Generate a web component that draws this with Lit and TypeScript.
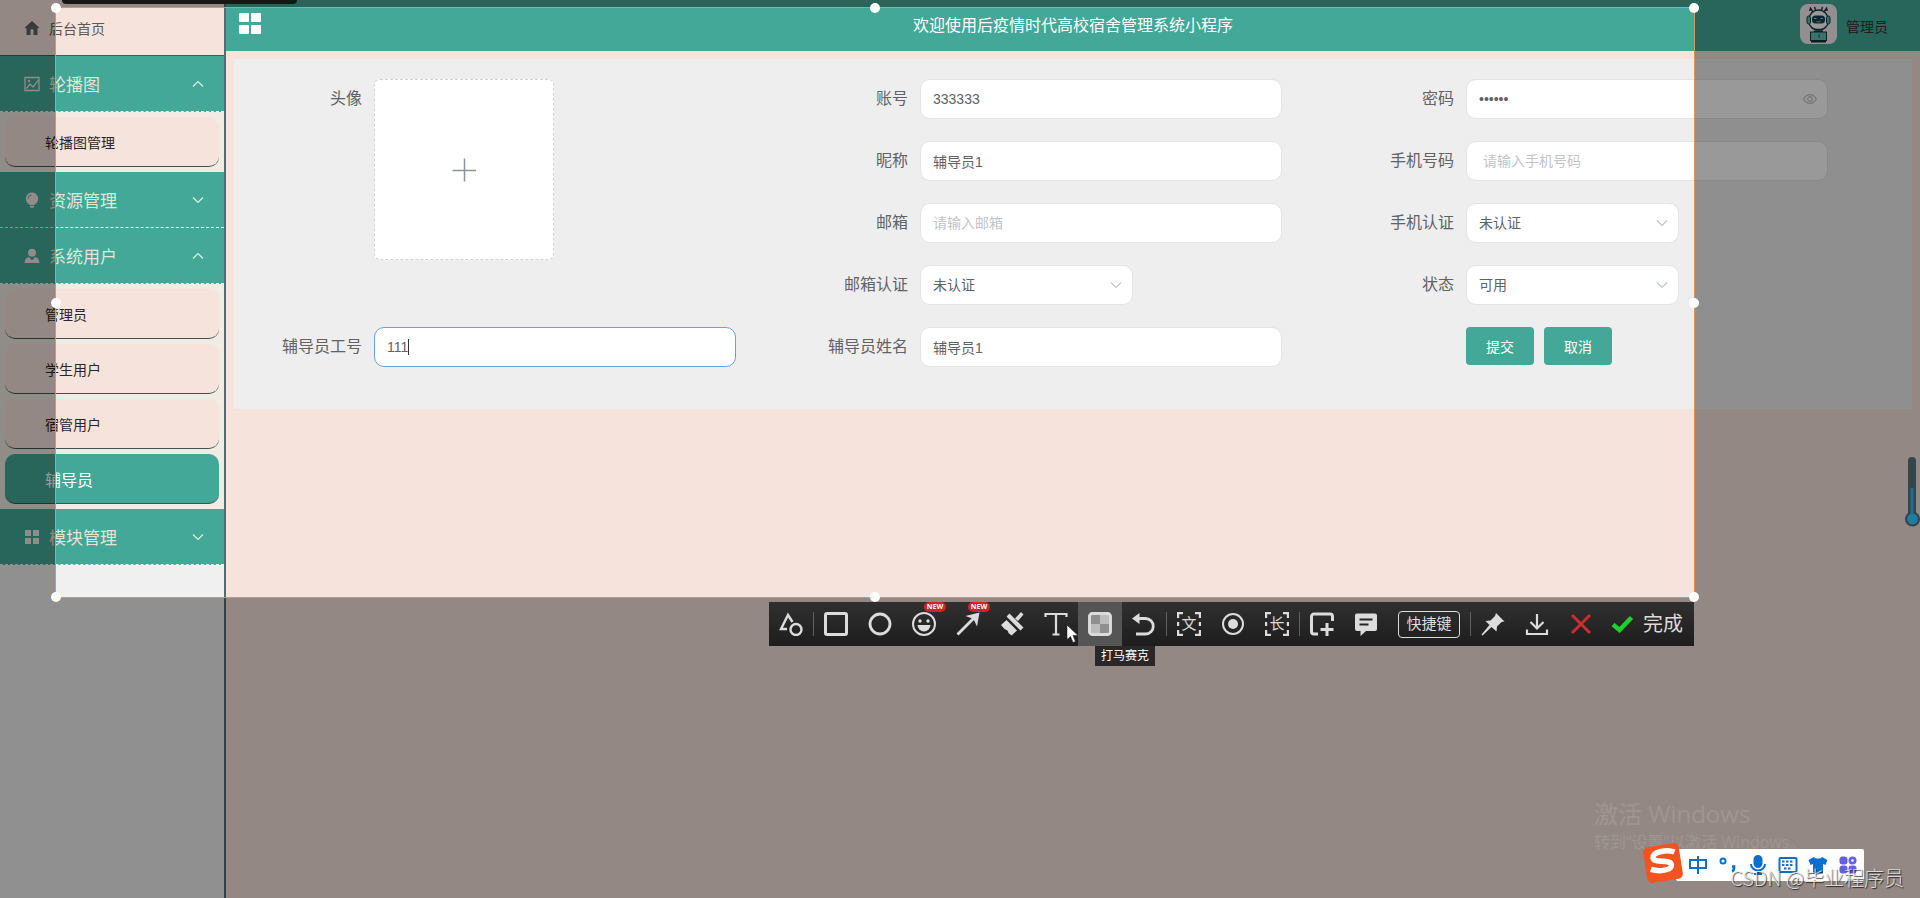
import { LitElement, html, css, svg, nothing } from "lit";
import { customElement, property } from "lit/decorators.js";
import { classMap } from "lit/directives/class-map.js";

const chevronDown = html`<svg class="chevron" width="12" height="8" viewBox="0 0 12 8" fill="none" stroke="currentColor" stroke-width="1.2"><path d="M1 1.5 6 6.5 11 1.5" /></svg>`;
const chevronUp = html`<svg class="chevron" width="12" height="8" viewBox="0 0 12 8" fill="none" stroke="currentColor" stroke-width="1.2"><path d="M1 6.5 6 1.5 11 6.5" /></svg>`;

const menuIcons: Record<string, unknown> = {
  home: svg`<path fill="currentColor" d="M8 1 .8 7.4l.9.9.8-.6V15h4v-4.500a1.500 1.500 0 0 1 3 0V15h4V7.700l.8.6.9-.9z"/>`,
  picture: svg`<path fill="none" stroke="currentColor" stroke-width="1.300" d="M1 1.500h14v13H1zM2.500 12.500 6 8l3 3 5.500-7"/><circle cx="5" cy="5" r="1.200" fill="currentColor"/>`,
  bulb: svg`<path fill="currentColor" d="M8 .5a6.300 6.300 0 0 0-3.800 11.200L5.500 13h5l1.300-1.300A6.300 6.300 0 0 0 8 .5zM6 13.800h4v1.500l-2 .7-2-.7z"/><path d="M4 6.500A4 4 0 0 1 7.500 3" stroke="#7d9c95" fill="none"/>`,
  user: svg`<circle cx="8" cy="4.700" r="4" fill="currentColor"/><path fill="currentColor" d="M5 9l3 3.500L11 9c2.700.8 4.500 2.800 4.500 6H.5C.5 11.800 2.300 9.800 5 9z"/>`,
  grid: svg`<path fill="currentColor" d="M1 1h6v6H1zM9 1h6v6H9zM1 9h6v6H1zM9 9h6v6H9z"/>`,
};

interface MenuGroup {
  title: string;
  icon: string;
  open: boolean;
  items: string[];
}

const groups: MenuGroup[] = [
  { title: "轮播图", icon: "picture", open: true, items: ["轮播图管理"] },
  { title: "资源管理", icon: "bulb", open: false, items: [] },
  { title: "系统用户", icon: "user", open: true, items: ["管理员", "学生用户", "宿管用户", "辅导员"] },
  { title: "模块管理", icon: "grid", open: false, items: [] },
];

@customElement("side-menu")
export class SideMenu extends LitElement {
  @property() active = "辅导员";

  static styles = css`
    :host { display: block; background: #f0f0f0; border-right: 2px solid #586b73; }
    * { box-sizing: border-box; }
    a { text-decoration: none; }
    .home, .group { display: flex; align-items: center; height: 56px; width: 100%; padding: 0 20px 0 24px; gap: 9px; }
    .home { background: #f5e3dc; border-bottom: 1px solid #3d5f5f; font-size: 14px; color: #5a5a5a; }
    .home .icon { color: #5f6264; }
    .group { background: #43a897; border: 0; border-bottom: 1px dashed #eef3e8; font: inherit; font-size: 17px; color: #e2e6d6; text-align: left; }
    .group .title { flex: 1; }
    .group .chevron { color: #d9f2e6; }
    .icon { width: 16px; height: 16px; color: #eeeae6; }
    .list { background: #f0ece3; padding: 5px; display: grid; gap: 5px; }
    .item { display: flex; align-items: center; height: 50px; padding: 0 40px; border-radius: 10px; border-bottom: 1px solid #3e5256; background: #f5e3dc; color: #2c2626; font-size: 14px; }
    .item.active { background: #43a897; color: #fff; font-size: 16px; }
  `;

  render() {
    return html`
      <nav>
        <a class="home" href="#home"><svg class="icon" viewBox="0 0 16 16">${menuIcons.home}</svg><span>后台首页</span></a>
        ${groups.map((g) => html`
          <button class="group" aria-expanded=${g.open}>
            <svg class="icon" viewBox="0 0 16 16">${menuIcons[g.icon]}</svg>
            <span class="title">${g.title}</span>
            ${g.open ? chevronUp : chevronDown}
          </button>
          ${g.open ? html`<div class="list">${g.items.map((t) => html`
            <a href="#" class=${classMap({ item: true, active: t === this.active })}>${t}</a>`)}</div>` : nothing}
        `)}
      </nav>`;
  }
}

@customElement("top-bar")
export class TopBar extends LitElement {
  static styles = css`
    :host { display: grid; grid-template-columns: 1fr auto 1fr; height: 51px; background: #43a897; padding: 0 32px 0 13px; }
    .toggle { justify-self: start; align-self: start; margin-top: 13px; padding: 0; border: 0; background: none; width: 22px; height: 22px; }
    .toggle svg { display: block; }
    h1 { margin: 0; padding: 14px 0 0 19px; font-size: 16px; line-height: 24px; font-weight: 400; color: #fff; }
    .user { justify-self: end; display: flex; gap: 9px; padding-top: 4px; height: 40px; font-size: 14px; line-height: 46px; color: #333; }
  `;
  render() {
    return html`
      <button class="toggle" aria-label="菜单"><svg width="22" height="22" viewBox="0 0 22 22" fill="#fff"><rect width="10" height="9" rx="1" /><rect x="12" width="10" height="9" rx="1" /><rect y="12" width="10" height="9" rx="1" /><rect x="12" y="12" width="10" height="9" rx="1" /></svg></button>
      <h1>欢迎使用后疫情时代高校宿舍管理系统小程序</h1>
      <div class="user">
        <svg width="37" height="40" viewBox="0 0 37 40">
          <rect width="37" height="40" rx="8" fill="#f4eef2" />
          <g fill="none" stroke="#1c3440" stroke-width="1.400">
            <path d="M13 8 10 3.500M15.500 6 14.500 3M24 8l3-4.500M21.500 6l1-3M11 6H9M26 6h2" />
            <path d="M9 15a9.500 9 0 0 1 19 0v3a9.500 8 0 0 1-19 0z" fill="#fff" />
            <path d="M14 25.500h9M14 27.500h9" />
          </g>
          <rect x="7" y="12" width="3.500" height="8" rx="1.700" fill="#56bdb0" stroke="#1c3440" />
          <rect x="26.500" y="12" width="3.500" height="8" rx="1.700" fill="#56bdb0" stroke="#1c3440" />
          <rect x="12" y="11.500" width="13" height="8" rx="3.500" fill="#16404f" />
          <path d="M14 14.500h2.500M20.500 14.500H23M16.500 17.200c1.500 1 2.500 1 4 0" stroke="#8fdcd8" fill="none" />
          <rect x="10.500" y="28" width="16" height="8.500" fill="#62c0b4" stroke="#1c3440" />
          <path d="M19.500 30.500a2 2 0 0 0 0 3" stroke="#16404f" fill="none" />
          <path d="M11 37.500h15" stroke="#10303a" stroke-width="2" />
        </svg>
        <span>管理员</span>
      </div>`;
  }
}

@customElement("counselor-form")
export class CounselorForm extends LitElement {
  static styles = css`
    :host { display: block; background: #eee; padding: 20px; }
    * { box-sizing: border-box; }
    form { display: grid; grid-template-columns: repeat(3, 1fr); row-gap: 22px; padding-bottom: 22px; }
    .row { display: grid; grid-template-columns: 120px 1fr; align-items: start; min-height: 40px; }
    .tall { grid-row: span 4; height: 226px; }
    label { padding-right: 12px; text-align: right; font-size: 16px; line-height: 40px; color: #606266; white-space: nowrap; }
    .field { position: relative; display: grid; width: 85%; align-items: center; }
    .field.half { width: 50%; }
    .field > * { grid-area: 1 / 1; }
    .box { appearance: none; width: 100%; height: 40px; padding: 0 12px; border: 1px solid #e4e4e4; border-radius: 10px; background: #fff; font: inherit; font-size: 14px; color: #606266; outline: 0; }
    .box::placeholder { color: #c0c4cc; }
    .box.focused { border-color: #6a9fd8; }
    .mark { justify-self: end; margin-right: 11px; color: #c0c4cc; pointer-events: none; }
    .caret { position: absolute; left: 34px; top: 12px; width: 1px; height: 16px; background: #333; }
    .upload { width: 180px; height: 181px; display: grid; place-items: center; border: 1px dashed #d4d4d4; border-radius: 6px; background: #fff; padding: 0; }
    .actions { grid-column: 2; display: flex; gap: 10px; }
    .btn { width: 68px; height: 38px; padding: 0; border: 0; border-radius: 4px; background: #43a897; color: #fff; font: inherit; font-size: 14px; }
  `;

  private text(id: string, label: string, value: string, placeholder = "", focused = false) {
    return html`<div class="row"><label for=${id}>${label}</label>
      <div class="field"><input id=${id} class=${classMap({ box: true, focused })} type="text" .value=${value} placeholder=${placeholder} />${focused ? html`<i class="caret"></i>` : nothing}</div></div>`;
  }

  private pick(id: string, label: string, options: string[]) {
    return html`<div class="row"><label for=${id}>${label}</label>
      <div class="field half"><select id=${id} class="box">${options.map((o) => html`<option>${o}</option>`)}</select>
      <svg class="mark" width="12" height="8" viewBox="0 0 12 8" fill="none" stroke="currentColor" stroke-width="1.200"><path d="M1 1.500 6 6.500 11 1.500" /></svg></div></div>`;
  }

  render() {
    return html`<form>
      <div class="row tall"><label for="photo">头像</label>
        <button id="photo" type="button" class="upload" aria-label="头像"><svg width="24" height="24" viewBox="0 0 24 24" stroke="#8c939d" stroke-width="1.500"><path d="M12.500 .5v23M.5 12.500h24" /></svg></button></div>
      ${this.text("account", "账号", "333333")}
      <div class="row"><label for="pwd">密码</label>
        <div class="field"><input id="pwd" class="box" type="password" value="333333" autocomplete="off" />
        <svg class="mark" width="14" height="12" viewBox="0 0 14 12" fill="none" stroke="currentColor" stroke-width="1.200"><path d="M.7 6C3.500.2 10.500.2 13.300 6 10.500 11.800 3.500 11.800.7 6z" /><circle cx="7" cy="6" r="2.300" /></svg></div></div>
      ${this.text("nick", "昵称", "辅导员1")}
      ${this.text("phone", "手机号码", "", " 请输入手机号码")}
      ${this.text("mail", "邮箱", "", "请输入邮箱")}
      ${this.pick("phone-ok", "手机认证", ["未认证", "已认证"])}
      ${this.pick("mail-ok", "邮箱认证", ["未认证", "已认证"])}
      ${this.pick("state", "状态", ["可用", "禁用"])}
      ${this.text("number", "辅导员工号", "111", "", true)}
      ${this.text("name", "辅导员姓名", "辅导员1")}
      <div class="row"><div class="actions"><button type="button" class="btn">提交</button><button type="button" class="btn">取消</button></div></div>
    </form>`;
  }
}

const bracket = svg`<path d="M1 6V1h5M18 1h5v5M23 18v5h-5M6 23H1v-5M1 10v4M23 10v4" />`;

interface Tool {
  name: string;
  art?: unknown;
  glyph?: string;
  badge?: boolean;
  on?: boolean;
}

const tools: (Tool | null)[] = [
  { name: "图形", art: svg`<path d="M8 17H2L9 3l4.500 7" /><circle cx="17" cy="17.500" r="5.500" />` },
  null,
  { name: "矩形", art: svg`<rect x="1.500" y="1.500" width="21" height="21" rx="1.500" stroke-width="3" />` },
  { name: "圆形", art: svg`<circle cx="12" cy="12" r="10" stroke-width="2.800" />` },
  { name: "表情", badge: true, art: svg`<circle cx="12" cy="12" r="11" stroke-width="2" /><g fill="currentColor" stroke="none"><circle cx="8" cy="9" r="1.700" /><circle cx="16" cy="9" r="1.700" /><path d="M5.500 13h13a6.500 6.500 0 0 1-13 0z" /></g>` },
  { name: "箭头", badge: true, art: svg`<path d="M1.500 22.500 18 6" stroke-width="2.800" /><path d="M9.500 4 23.500 0.500 21 14.500 17.500 7z" fill="currentColor" stroke="none" />` },
  { name: "画笔", art: svg`<g fill="currentColor" stroke="none"><path d="M1 13 6.500 8 17 18.500 11.500 23.500 8.500 21 7.500 18.500 4.500 17z M6.500 4.500 9.500 1.500 23.500 15.500 20.500 18.500z M15 6.500 21 0l2.500 2.500L18 9z" /></g>` },
  { name: "文字", art: svg`<path d="M1.500 5V2h21v3M12 2v20M8.500 22.500h7" stroke-width="2.200" />` },
  { name: "打马赛克", on: true, art: svg`<rect x="1.500" y="1.500" width="21" height="21" rx="3" fill="#bdbdbd" /><path d="M3 3h9v9H3zM12 12h9v9h-9z" fill="#8f8f8f" stroke="none" /><rect x="1.500" y="1.500" width="21" height="21" rx="3" stroke-width="2.800" />` },
  { name: "撤销", art: svg`<path d="M4 22h9.500a7.500 7.500 0 0 0 0-15.500H4" stroke-width="2.800" /><path d="M0 6.500 7.500 1v11z" fill="currentColor" stroke="none" />` },
  null,
  { name: "翻译", glyph: "文", art: bracket },
  { name: "录屏", art: svg`<circle cx="12" cy="12" r="10" stroke-width="2" /><circle cx="12" cy="12" r="5" fill="currentColor" stroke="none" />` },
  { name: "长截图", glyph: "长", art: bracket },
  null,
  { name: "添加", art: svg`<path d="M8 22H4a2.500 2.500 0 0 1-2.500-2.500v-15A2.500 2.500 0 0 1 4 2h16a2.500 2.500 0 0 1 2.500 2.500V9M17 11v13M10.500 17.500h13" stroke-width="3" />` },
  { name: "备注", art: svg`<path d="M3 1.500h18a2 2 0 0 1 2 2V17a2 2 0 0 1-2 2h-9l-5.500 5V19H3a2 2 0 0 1-2-2V3.500a2 2 0 0 1 2-2z" fill="currentColor" stroke="none" /><path d="M5.500 7.500h13M5.500 12.500h9" stroke="#262525" stroke-width="2" />` },
];

const tail: Tool[] = [
  { name: "钉在桌面", art: svg`<path d="M15 1l8.500 8.500-3 .5-4.500 4.500-.5 5L10.500 15 1.500 23.500.5 22.500 8.500 13 4.500 9l5-.5L14 4z" fill="currentColor" stroke="none" />` },
  { name: "保存", art: svg`<path d="M12 2v14M5.500 10 12 16.500 18.500 10M2 17.500V22h20v-4.500" stroke-width="2.200" />` },
  { name: "关闭", art: svg`<path d="M3 3l18 18M21 3 3 21" stroke="#cf2b33" stroke-width="3" />` },
];

@customElement("snip-toolbar")
export class SnipToolbar extends LitElement {
  static styles = css`
    :host { display: flex; align-items: stretch; height: 44px; background: linear-gradient(#303030, #1e1d1d); color: #dcdcdc; }
    * { box-sizing: border-box; }
    button { border: 0; padding: 0; background: none; color: inherit; font: inherit; white-space: nowrap; }
    .tool { position: relative; width: 44px; display: grid; place-items: center; }
    .tool > svg, .tool > .glyph { grid-area: 1 / 1; }
    .tool.on { background: #555; }
    .glyph { font-size: 15px; line-height: 20px; }
    .sep { width: 1px; margin: 10px 0; background: #606060; }
    .badge { position: absolute; right: 0; top: 0; width: 22px; height: 10px; border-radius: 5px; background: #e01c22; color: #fff; font: 700 7px/10px "Open Sans", sans-serif; text-align: center; }
    .tip { position: absolute; left: 17px; top: 44px; padding: 0 6px; background: #2b2727; color: #fff; font-size: 12px; line-height: 20px; white-space: nowrap; }
    .keys { align-self: center; width: 62px; height: 27px; margin: 0 10px; border: 1px solid #dcdcdc; border-radius: 4px; font-size: 15px; line-height: 20px; }
    .done { display: flex; align-items: center; gap: 9px; padding: 0 11px 0 8px; font-size: 20px; line-height: 24px; }
  `;

  private tool(t: Tool) {
    return html`<button class=${classMap({ tool: true, on: !!t.on })} aria-label=${t.name}>
      <svg width="24" height="24" viewBox="0 0 24 24" fill="none" stroke="currentColor" stroke-width="2.400">${t.art}</svg>
      ${t.glyph ? html`<span class="glyph">${t.glyph}</span>` : nothing}
      ${t.badge ? html`<span class="badge">NEW</span>` : nothing}
      ${t.on ? html`<span class="tip">${t.name}</span>` : nothing}
    </button>`;
  }

  render() {
    return html`
      ${tools.map((t) => (t ? this.tool(t) : html`<i class="sep"></i>`))}
      <button class="keys">快捷键</button><i class="sep"></i>
      ${tail.map((t) => this.tool(t))}
      <button class="done"><svg width="23" height="18" viewBox="0 0 23 18"><path d="M2 9.500 8.500 15 20.500 2.500" fill="none" stroke="#20cf2c" stroke-width="4.500" /></svg>完成</button>`;
  }
}

const inputIcons = [
  svg`<path d="M2 5h16v8H2zM10 1v18" />`,
  svg`<circle cx="5" cy="6" r="2.500" /><path d="M14 11.500h2v2c0 1.500-.8 2.500-2 3" stroke-width="2.600" />`,
  svg`<rect x="6.500" y="1" width="7" height="11" rx="3.500" fill="currentColor" /><path d="M3 9a7 6.500 0 0 0 14 0M10 15.500V19M6 19h8" />`,
  svg`<rect x="1.500" y="3" width="17" height="14" rx="1" /><path d="M4 6.500h12M4 10h12M6 13.500h8" stroke-dasharray="2.500 1.500" />`,
  svg`<path d="M6 2c1.500 2 6.500 2 8 0l5.500 3-2 5-2.500-1v9.500H5V9l-2.500 1-2-5z" fill="currentColor" stroke="none" />`,
  svg`<g fill="#6560dd" stroke="none"><rect x="1.500" y="1.500" width="8" height="8" rx="3" /><circle cx="14.500" cy="5.500" r="4" /><rect x="1.500" y="10.500" width="8" height="8" rx="3" /><rect x="10.500" y="10.500" width="8" height="8" rx="3" /></g><circle cx="14.500" cy="5.500" r="1.300" fill="#fff" stroke="none" />`,
];

@customElement("app-root")
export class AppRoot extends LitElement {
  static styles = css`
    :host { display: block; position: relative; overflow: hidden; font-family: "Liberation Sans", "Noto Sans CJK SC", sans-serif; }
    * { box-sizing: border-box; }
    .page { display: grid; grid-template-columns: 226px 1fr; min-height: 100vh; background: #f5e3dc; }
    .panel { margin: 8px; }
    .notch { position: absolute; left: 62px; top: 0; width: 235px; height: 4px; border-radius: 0 0 6px 6px; background: #2c2628; }
    .activate { position: absolute; right: 102px; bottom: 44px; width: 224px; color: #9e9691; white-space: nowrap; font-family: "Open Sans", "Noto Sans CJK SC", sans-serif; font-size: 16px; line-height: 24px; }
    .activate strong { display: block; font-weight: 400; font-size: 24px; line-height: 32px; }
    .selection { position: absolute; left: 55px; top: 7px; right: 225px; height: 591px; border: 1px solid #dd9456; box-shadow: 0 0 0 2000px rgba(0, 0, 0, 0.4); }
    .handle { position: absolute; width: 10px; height: 10px; margin: -5px; border-radius: 5px; background: #fff; }
    .n { top: 0; } .m { top: 50%; } .s { top: 100%; }
    .w { left: 0; } .c { left: 50%; } .e { left: 100%; }
    .tools { position: absolute; right: 0; top: 594px; }
    .cursor { position: absolute; left: 1010px; top: 616px; }
    .meter { position: absolute; right: 0; top: 456px; }
    .ime { position: absolute; right: 56px; bottom: 17px; height: 32px; width: 188px; padding: 0 6px 0 12px; display: flex; align-items: center; justify-content: space-between; background: #fff; border-radius: 2px; color: #0a6fd0; }
    .logo { position: absolute; right: 236px; bottom: 15px; }
    .credit { position: absolute; right: 16px; bottom: 8px; color: rgba(236, 236, 236, 0.85); font-family: "Noto Sans CJK SC", sans-serif; font-weight: 300; font-size: 20px; line-height: 24px; text-shadow: 1px 1px 1px rgba(0, 0, 0, 0.7); }
  `;

  render() {
    return html`
      <div class="page">
        <side-menu></side-menu>
        <main><top-bar></top-bar><counselor-form class="panel"></counselor-form></main>
      </div>
      <div class="notch"></div>
      <div class="selection">
        ${["n w", "n c", "n e", "m w", "m e", "s w", "s c", "s e"].map((p) => html`<i class="handle ${p}"></i>`)}
        <snip-toolbar class="tools"></snip-toolbar>
        <svg class="cursor" width="14" height="20" viewBox="0 0 14 20"><path d="M1 1v14.500l3.500-3 2.500 6 2.500-1-2.500-6H12z" fill="#fff" stroke="#222" stroke-width=".6" /></svg>
      </div>
      <div class="activate"><strong>激活 Windows</strong>转到“设置”以激活 Windows。</div>
      <svg class="meter" width="15" height="72" viewBox="0 0 15 72"><rect x="3" y="1" width="8" height="62" rx="4" fill="#33474b" /><circle cx="7.500" cy="63" r="7.500" fill="#2f4349" /><path d="M5.500 32h3v28h-3z" fill="#1d6f92" /><circle cx="7.500" cy="63" r="5.500" fill="#1f7ba0" /></svg>
      <div class="ime">${inputIcons.map((i) => html`<svg width="20" height="20" viewBox="0 0 20 20" fill="none" stroke="currentColor" stroke-width="2">${i}</svg>`)}</div>
      <svg class="logo" width="42" height="40" viewBox="0 0 42 40"><g transform="rotate(-9 21 20)"><rect x="3" y="2" width="36" height="36" rx="5" fill="#f4521e" /><path d="M34 11c-6-4-22-4-22 2.500 0 6 17 3.500 17 9.500 0 5.500-13 5.500-21 1.500" fill="none" stroke="#fff" stroke-width="5.500" /></g></svg>
      <div class="credit">CSDN @毕业程序员</div>`;
  }
}
